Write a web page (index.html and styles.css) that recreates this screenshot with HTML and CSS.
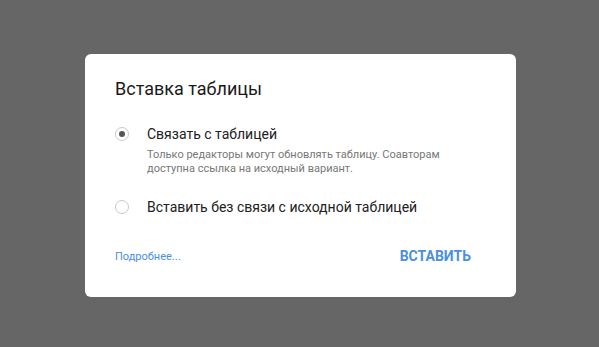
FILE: index.html
```html
<!DOCTYPE html>
<html>
  <head>
    <meta charset="utf-8">
    <title>Вставка таблицы</title>
    <link rel="stylesheet" href="styles.css">
  </head>
  <body>
    <div class="overlay">
      <div class="dialog">
        <h2 class="title">Вставка таблицы</h2>
        <div class="options">
          <label class="option">
            <span class="radio checked"></span>
            <span class="option-text">
              <span class="option-label">Связать с таблицей</span>
              <span class="option-desc">Только редакторы могут обновлять таблицу. Соавторам доступна ссылка на исходный вариант.</span>
            </span>
          </label>
          <label class="option">
            <span class="radio"></span>
            <span class="option-text">
              <span class="option-label">Вставить без связи с исходной таблицей</span>
            </span>
          </label>
        </div>
        <div class="footer">
          <a class="link" href="#">Подробнее...</a>
          <button class="button">ВСТАВИТЬ</button>
        </div>
      </div>
    </div>
  </body>
</html>
```

FILE: styles.css
```css
html, body {
margin: 0;
padding: 0;
height: 100%;
}

body {
background-color: #666666;
font-family: Roboto, "Noto Sans", sans-serif;
color: #212121;
}

.overlay {
padding: 54px 0 0 85px;
}

.dialog {
box-sizing: border-box;
width: 431px;
height: 243px;
background-color: #ffffff;
border-radius: 6px;
padding: 24px 45px 0 30px;
display: flex;
flex-direction: column;
}

.title {
margin: 0;
font-size: 18px;
font-weight: 400;
line-height: 22px;
color: #1a1a1a;
}

.options {
display: flex;
flex-direction: column;
gap: 21px;
margin-top: 24px;
}

.option {
display: flex;
align-items: flex-start;
gap: 18px;
cursor: pointer;
}

.radio {
box-sizing: border-box;
flex: none;
width: 14px;
height: 14px;
margin-top: 3px;
border: 1px solid #c8c8c8;
border-radius: 50%;
display: flex;
align-items: center;
justify-content: center;
}

.radio.checked::after {
content: "";
width: 6px;
height: 6px;
border-radius: 50%;
background-color: #555555;
}

.option-text {
display: flex;
flex-direction: column;
}

.option-label {
font-size: 14px;
line-height: 20px;
color: #212121;
}

.option-desc {
font-size: 11px;
line-height: 14px;
color: #777777;
margin-top: 4px;
max-width: 310px;
}

.footer {
display: flex;
align-items: center;
justify-content: space-between;
margin-top: 31px;
}

.link {
font-size: 11px;
color: #4a8fe0;
text-decoration: none;
}

.button {
font-family: Roboto, "Noto Sans", sans-serif;
font-size: 14px;
font-weight: 700;
color: #4a8fe0;
background: none;
border: none;
padding: 0;
cursor: pointer;
}
```
